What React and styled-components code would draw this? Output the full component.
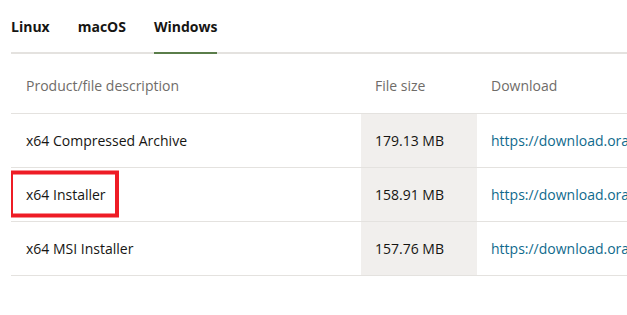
import React from 'react';
import styled, { createGlobalStyle } from 'styled-components';

const GlobalStyle = createGlobalStyle`
  html, body {
    margin: 0;
    padding: 0;
    background: #fff;
    overflow: hidden;
  }
  body {
    font-family: "Open Sans", "Noto Sans", sans-serif;
    color: #161513;
  }
`;

const Page = styled.div`
  width: 627px;
  height: 315px;
  padding-left: 11px;
  box-sizing: border-box;
  overflow: hidden;
`;

const Tabs = styled.ul`
  display: flex;
  gap: 28px;
  list-style: none;
  margin: 0;
  padding: 0;
  height: 52px;
  border-bottom: 2px solid #e4e2df;
  width: 1000px;
`;

const Tab = styled.li`
  display: flex;
  align-items: center;
  font-size: 14px;
  font-weight: 700;
  color: #161513;
  border-bottom: 2px solid ${p => (p.$active ? '#5a7d4a' : 'transparent')};
  margin-bottom: -2px;
`;

const Table = styled.table`
  border-collapse: collapse;
  table-layout: fixed;
  width: 900px;
  font-size: 14px;
`;

const Th = styled.th`
  box-sizing: border-box;
  text-align: left;
  font-weight: 400;
  color: #6f6c69;
  height: 59px;
  padding: 5px 14px 0;
  border-bottom: 1px solid #e4e2df;
  width: ${p => p.$w || 'auto'};
  &:first-child { padding-left: 15px; }
`;

const Td = styled.td`
  height: 53px;
  padding: 0 14px;
  border-bottom: 1px solid #e4e2df;
  white-space: nowrap;
  overflow: hidden;
  background: ${p => (p.$shade ? '#f1efed' : 'transparent')};
  &:first-child { padding-left: 15px; }
`;

const Link = styled.a`
  color: #0f6a8d;
  text-decoration: none;
`;

const Marked = styled.span`
  position: relative;
  &::after {
    content: '';
    position: absolute;
    left: -17px;
    top: 50%;
    width: 110px;
    height: 47px;
    transform: translateY(-50%);
    border: 4px solid #ee1c25;
    box-sizing: border-box;
  }
`;

const rows = [
  { name: 'x64 Compressed Archive', size: '179.13 MB', url: 'https://download.oracle.com/java/21/latest/jdk-21_windows-x64_bin.zip' },
  { name: 'x64 Installer', size: '158.91 MB', url: 'https://download.oracle.com/java/21/latest/jdk-21_windows-x64_bin.exe', marked: true },
  { name: 'x64 MSI Installer', size: '157.76 MB', url: 'https://download.oracle.com/java/21/latest/jdk-21_windows-x64_bin.msi' },
];

export default function App() {
  return (
    <Page>
      <GlobalStyle />
      <Tabs>
        <Tab>Linux</Tab>
        <Tab>macOS</Tab>
        <Tab $active>Windows</Tab>
      </Tabs>
      <Table>
        <thead>
          <tr>
            <Th $w="350px">Product/file description</Th>
            <Th $w="116px">File size</Th>
            <Th>Download</Th>
          </tr>
        </thead>
        <tbody>
          {rows.map(r => (
            <tr key={r.name}>
              <Td>{r.marked ? <Marked>{r.name}</Marked> : r.name}</Td>
              <Td $shade>{r.size}</Td>
              <Td><Link href="#">{r.url}</Link></Td>
            </tr>
          ))}
        </tbody>
      </Table>
    </Page>
  );
}
